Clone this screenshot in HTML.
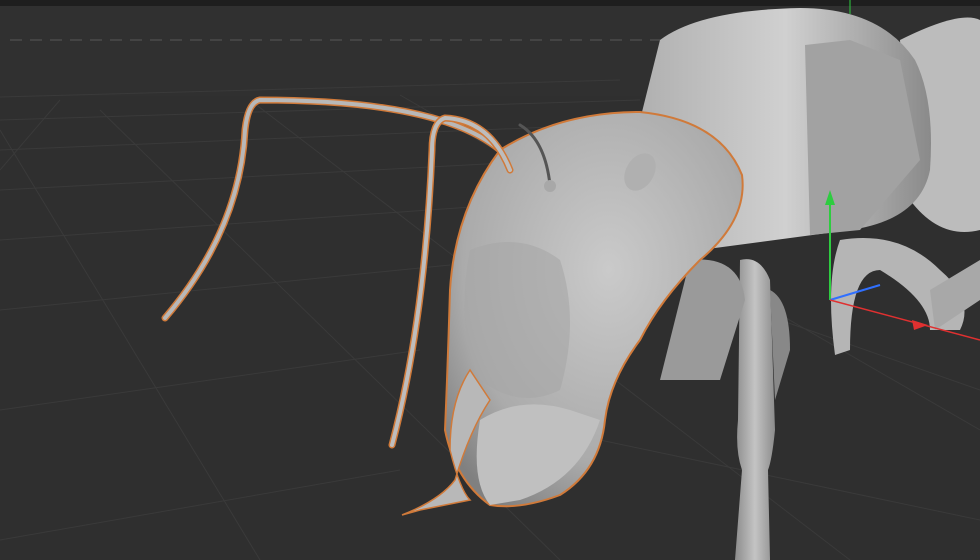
<!DOCTYPE html>
<html><head><style>
html,body{margin:0;padding:0;background:#2e2e2e;width:980px;height:560px;overflow:hidden}
svg{display:block}
</style></head><body>
<svg width="980" height="560" viewBox="0 0 980 560" xmlns="http://www.w3.org/2000/svg">
<defs>
<radialGradient id="g1" cx="0.55" cy="0.4" r="0.7"><stop offset="0" stop-color="#cacaca"/><stop offset="0.7" stop-color="#ababab"/><stop offset="1" stop-color="#808080"/></radialGradient>
<linearGradient id="gb" x1="0" y1="0" x2="1" y2="0"><stop offset="0" stop-color="#b0b0b0"/><stop offset="0.5" stop-color="#d0d0d0"/><stop offset="1" stop-color="#8a8a8a"/></linearGradient>
<linearGradient id="gl" x1="0" y1="0" x2="1" y2="0"><stop offset="0" stop-color="#8c8c8c"/><stop offset="0.5" stop-color="#c4c4c4"/><stop offset="1" stop-color="#8c8c8c"/></linearGradient>
</defs>
<rect width="980" height="560" fill="#2f2f2f"/>
<rect width="980" height="6" fill="#1e1e1e"/>
<rect x="0" y="6" width="980" height="90" fill="#303030"/>
<line x1="10" y1="40" x2="660" y2="40" stroke="#4a4a4a" stroke-width="1.5" stroke-dasharray="12 8"/>
<g stroke="#3a3a3a" stroke-width="1">
<line x1="0" y1="97" x2="620" y2="80"/>
<line x1="0" y1="120" x2="640" y2="100"/>
<line x1="0" y1="150" x2="600" y2="125"/>
<line x1="0" y1="190" x2="560" y2="160"/>
<line x1="0" y1="240" x2="500" y2="205"/>
<line x1="0" y1="310" x2="450" y2="265"/>
<line x1="0" y1="410" x2="420" y2="350"/>
<line x1="0" y1="540" x2="400" y2="470"/>
<line x1="0" y1="130" x2="260" y2="560"/>
<line x1="100" y1="110" x2="560" y2="560"/>
<line x1="250" y1="100" x2="850" y2="560"/>
<line x1="400" y1="95" x2="980" y2="430"/>
<line x1="60" y1="100" x2="0" y2="170"/>
<line x1="780" y1="320" x2="980" y2="390"/>
<line x1="600" y1="440" x2="980" y2="520"/>
</g>
<path d="M900 40 Q960 10 980 20 L980 230 Q940 240 910 200 Z" fill="#bcbcbc"/>
<path d="M660 40 Q700 10 800 8 Q880 8 915 60 Q935 100 930 170 Q920 220 850 230 L700 250 Q640 200 640 120 Z" fill="url(#gb)"/>
<path d="M805 45 L850 40 L900 60 L920 160 L860 230 L810 235 Z" fill="#a2a2a2"/>
<path d="M840 240 Q900 230 940 270 Q975 300 960 330 L930 330 Q930 300 880 270 Q850 270 850 350 L835 355 Q825 280 840 240Z" fill="#b5b5b5"/>
<path d="M930 290 L980 260 L980 300 L935 330 Z" fill="#a8a8a8"/>
<path d="M740 260 Q760 255 770 280 L775 430 Q772 460 768 470 L770 560 L735 560 L742 470 Q735 450 738 420 Z" fill="url(#gl)"/>
<path d="M690 260 Q740 255 745 300 L720 380 L660 380 Z" fill="#9a9a9a"/>
<path d="M770 290 Q790 300 790 350 L775 400 Z" fill="#888"/>
<path d="M500 150 Q560 112 640 112 Q720 120 742 175 Q748 220 700 260 Q660 300 640 340 Q610 380 605 420 Q600 470 560 495 Q520 510 490 505 Q455 480 445 430 Q448 360 450 290 Q455 210 500 150 Z" fill="url(#g1)" stroke="#d07a3a" stroke-width="2"/>
<path d="M470 250 Q520 230 560 260 Q580 320 560 390 Q520 410 480 380 Q455 330 470 250Z" fill="#a6a6a6" opacity="0.6"/>
<ellipse cx="640" cy="172" rx="14" ry="20" fill="#b0b0b0" transform="rotate(30 640 172)"/>
<path d="M470 370 Q450 400 450 450 Q460 490 470 500 L420 510 L402 515 Q440 500 455 480 Q470 430 490 400 Z" fill="#b8b8b8" stroke="#d07a3a" stroke-width="1.5"/>
<path d="M480 420 Q520 395 570 410 L600 420 Q580 480 520 500 L490 505 Q470 480 480 420Z" fill="#c0c0c0"/>
<g fill="none" stroke-linecap="round">
<path d="M500 150 Q440 100 260 100 Q248 102 245 130 Q240 230 165 318" stroke="#d07a3a" stroke-width="7"/>
<path d="M500 150 Q440 100 260 100 Q248 102 245 130 Q240 230 165 318" stroke="#b8b8b8" stroke-width="4"/>
<path d="M510 170 Q490 120 445 118 Q432 122 432 150 Q425 320 392 445" stroke="#d07a3a" stroke-width="7"/>
<path d="M510 170 Q490 120 445 118 Q432 122 432 150 Q425 320 392 445" stroke="#bdbdbd" stroke-width="4"/>
<path d="M550 185 Q545 140 520 125" stroke="#555" stroke-width="3"/>
</g>
<circle cx="550" cy="186" r="6" fill="#a8a8a8"/>
<line x1="830" y1="300" x2="830" y2="195" stroke="#2ecc40" stroke-width="2"/>
<polygon points="825,205 830,190 835,205" fill="#2ecc40"/>
<line x1="830" y1="300" x2="880" y2="285" stroke="#3070ff" stroke-width="2"/>
<line x1="830" y1="300" x2="980" y2="340" stroke="#e03030" stroke-width="1.5"/>
<polygon points="912,320 928,325 914,330" fill="#e03030"/>
<line x1="850" y1="0" x2="850" y2="14" stroke="#2ecc40" stroke-width="1"/>
</svg>
</body></html>
